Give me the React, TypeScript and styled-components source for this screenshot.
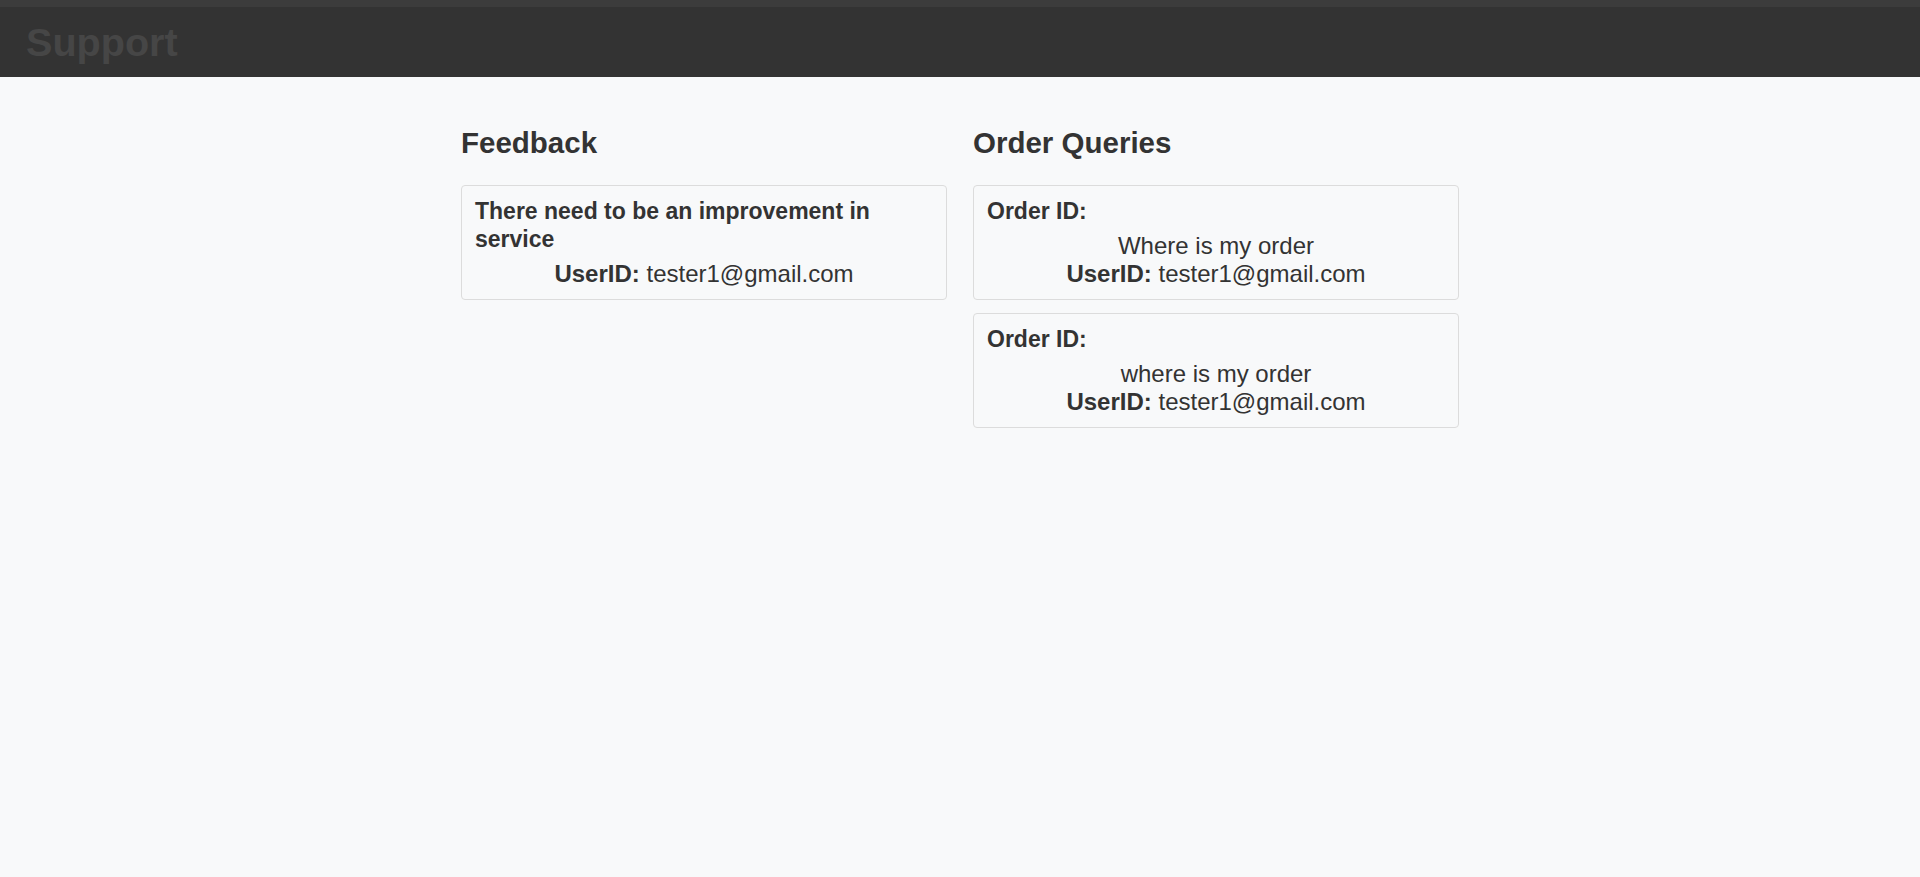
import React from "react";
import styled, { createGlobalStyle } from "styled-components";

const GlobalStyle = createGlobalStyle`
  html, body {
    margin: 0;
    padding: 0;
    background: #f8f9fa;
    font-family: "Liberation Sans", Arial, sans-serif;
    color: #333333;
  }
  * { box-sizing: border-box; }
`;

const Page = styled.div`
  min-height: 877px;
  background: #f8f9fa;
`;

const Header = styled.header`
  height: 77px;
  background: #333333;
  border-top: 7px solid #3c3c3c;
  display: flex;
  align-items: center;
  padding: 0 26px;
`;

const Brand = styled.h1`
  margin: 0;
  font-size: 39.6px;
  font-weight: 700;
  line-height: 1;
  color: #464646;
  padding-top: 2px;
`;

const Container = styled.main`
  width: 998px;
  margin: 0 auto;
  padding-top: 48px;
  display: grid;
  grid-template-columns: 1fr 1fr;
  column-gap: 26px;
  align-items: start;
`;

const Column = styled.section`
  display: flex;
  flex-direction: column;
`;

const SectionTitle = styled.h3`
  margin: 0 0 25px;
  font-size: 29.5px;
  line-height: 1.2;
  font-weight: 700;
  color: #333333;
`;

const CardList = styled.div`
  display: flex;
  flex-direction: column;
  gap: 13px;
`;

const Card = styled.div`
  border: 1px solid #dcdcdc;
  border-radius: 4px;
  background: #f8f9fa;
  padding: 12px 13px 11px;
`;

const CardTitle = styled.h5`
  margin: 0 0 6px;
  font-size: 23px;
  line-height: 1.2;
  font-weight: 700;
  color: #333333;
`;

const CardText = styled.div`
  text-align: center;
  font-size: 24px;
  line-height: 28px;
  color: #333333;
`;

const Label = styled.b`
  font-weight: 700;
`;

const feedback = [
  { text: "There need to be an improvement in service", user: "tester1@gmail.com" },
];

const orders = [
  { id: "", text: "Where is my order", user: "tester1@gmail.com" },
  { id: "", text: "where is my order", user: "tester1@gmail.com" },
];

export default function App() {
  return (
    <Page>
      <GlobalStyle />
      <Header>
        <Brand>Support</Brand>
      </Header>
      <Container>
        <Column>
          <SectionTitle>Feedback</SectionTitle>
          <CardList>
            {feedback.map((f, i) => (
              <Card key={i}>
                <CardTitle>{f.text}</CardTitle>
                <CardText>
                  <Label>UserID:</Label> {f.user}
                </CardText>
              </Card>
            ))}
          </CardList>
        </Column>
        <Column>
          <SectionTitle>Order Queries</SectionTitle>
          <CardList>
            {orders.map((o, i) => (
              <Card key={i}>
                <CardTitle>Order ID: {o.id}</CardTitle>
                <CardText>
                  {o.text}
                  <br />
                  <Label>UserID:</Label> {o.user}
                </CardText>
              </Card>
            ))}
          </CardList>
        </Column>
      </Container>
    </Page>
  );
}
